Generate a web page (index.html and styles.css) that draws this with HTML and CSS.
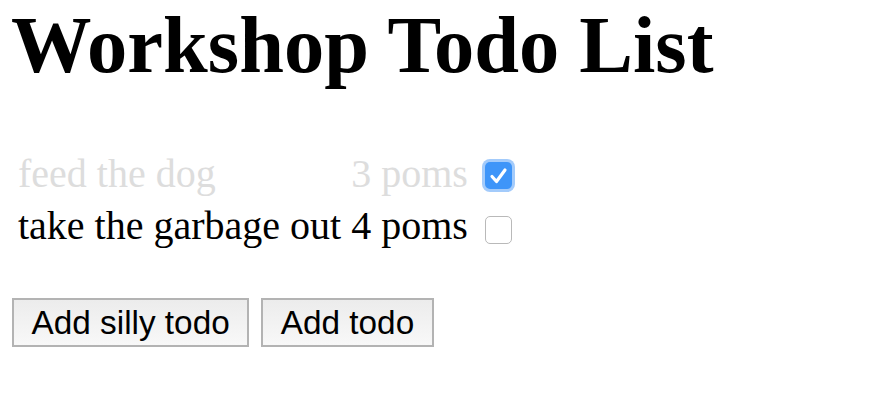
FILE: index.html
```html
<!DOCTYPE html>
<html lang="en">
<head>
<meta charset="utf-8">
<title>Workshop Todo List</title>
<link rel="stylesheet" href="styles.css">
</head>
<body>
<div class="app">
  <h1 class="title">Workshop Todo List</h1>
  <table class="todos">
    <tbody>
      <tr class="todo done">
        <td class="todo-name">feed the dog</td>
        <td class="todo-poms">3 poms</td>
        <td class="todo-check">
          <label class="cb cb-checked">
            <input type="checkbox" checked>
            <svg class="tick" viewBox="0 0 27 27" width="27" height="27" aria-hidden="true">
              <path d="M7 14.5 L11.5 19.5 L20 8" fill="none" stroke="#fff" stroke-width="3.2" stroke-linecap="round" stroke-linejoin="round"/>
            </svg>
          </label>
        </td>
      </tr>
      <tr class="todo">
        <td class="todo-name">take the garbage out</td>
        <td class="todo-poms">4 poms</td>
        <td class="todo-check">
          <label class="cb">
            <input type="checkbox">
          </label>
        </td>
      </tr>
    </tbody>
  </table>
  <div class="actions">
    <button class="btn" type="button">Add silly todo</button>
    <button class="btn" type="button">Add todo</button>
  </div>
</div>
</body>
</html>
```
FILE: styles.css
```css
html, body {
  margin: 0;
  padding: 0;
  background: #ffffff;
}

body {
  font-family: "Liberation Serif", "Times New Roman", serif;
  color: #000000;
}

.app {
  padding-left: 11px;
}

.title {
  margin: 0;
  font-size: 80.5px;
  line-height: 90px;
  font-weight: bold;
}

.todos {
  margin: 57.5px 0 0 2px;
  border-collapse: collapse;
  font-size: 40px;
  line-height: 46px;
}

.todos td {
  padding: 3px 5px;
  white-space: nowrap;
  vertical-align: top;
}

.todo.done {
  color: #dddddd;
}

.todo-check {
  padding-left: 12px !important;
}

.cb {
  position: relative;
  display: block;
  width: 27px;
  height: 27px;
  margin-top: 13.5px;
}

.cb-checked {
  margin-top: 11.5px;
}

.cb input {
  -webkit-appearance: none;
  appearance: none;
  box-sizing: border-box;
  display: block;
  margin: 0;
  width: 27px;
  height: 28px;
  border: 1px solid #b9b9b9;
  border-radius: 5px;
  background: #ffffff;
}

.cb input:checked {
  height: 27px;
  border: none;
  background: #3e95f9;
  box-shadow: 0 0 0 3px #a3cbfb;
}

.tick {
  position: absolute;
  left: 0;
  top: 0;
}

.actions {
  display: flex;
  gap: 12px;
  margin: 46.5px 0 0 1px;
}

.btn {
  font-family: "Liberation Sans", Arial, sans-serif;
  font-size: 33.33px;
  line-height: 38px;
  padding: 3.5px 17.5px;
  border: 2px solid #b3b3b3;
  border-radius: 0;
  background: linear-gradient(#ececec, #f8f8f8);
  color: #000000;
}
```
